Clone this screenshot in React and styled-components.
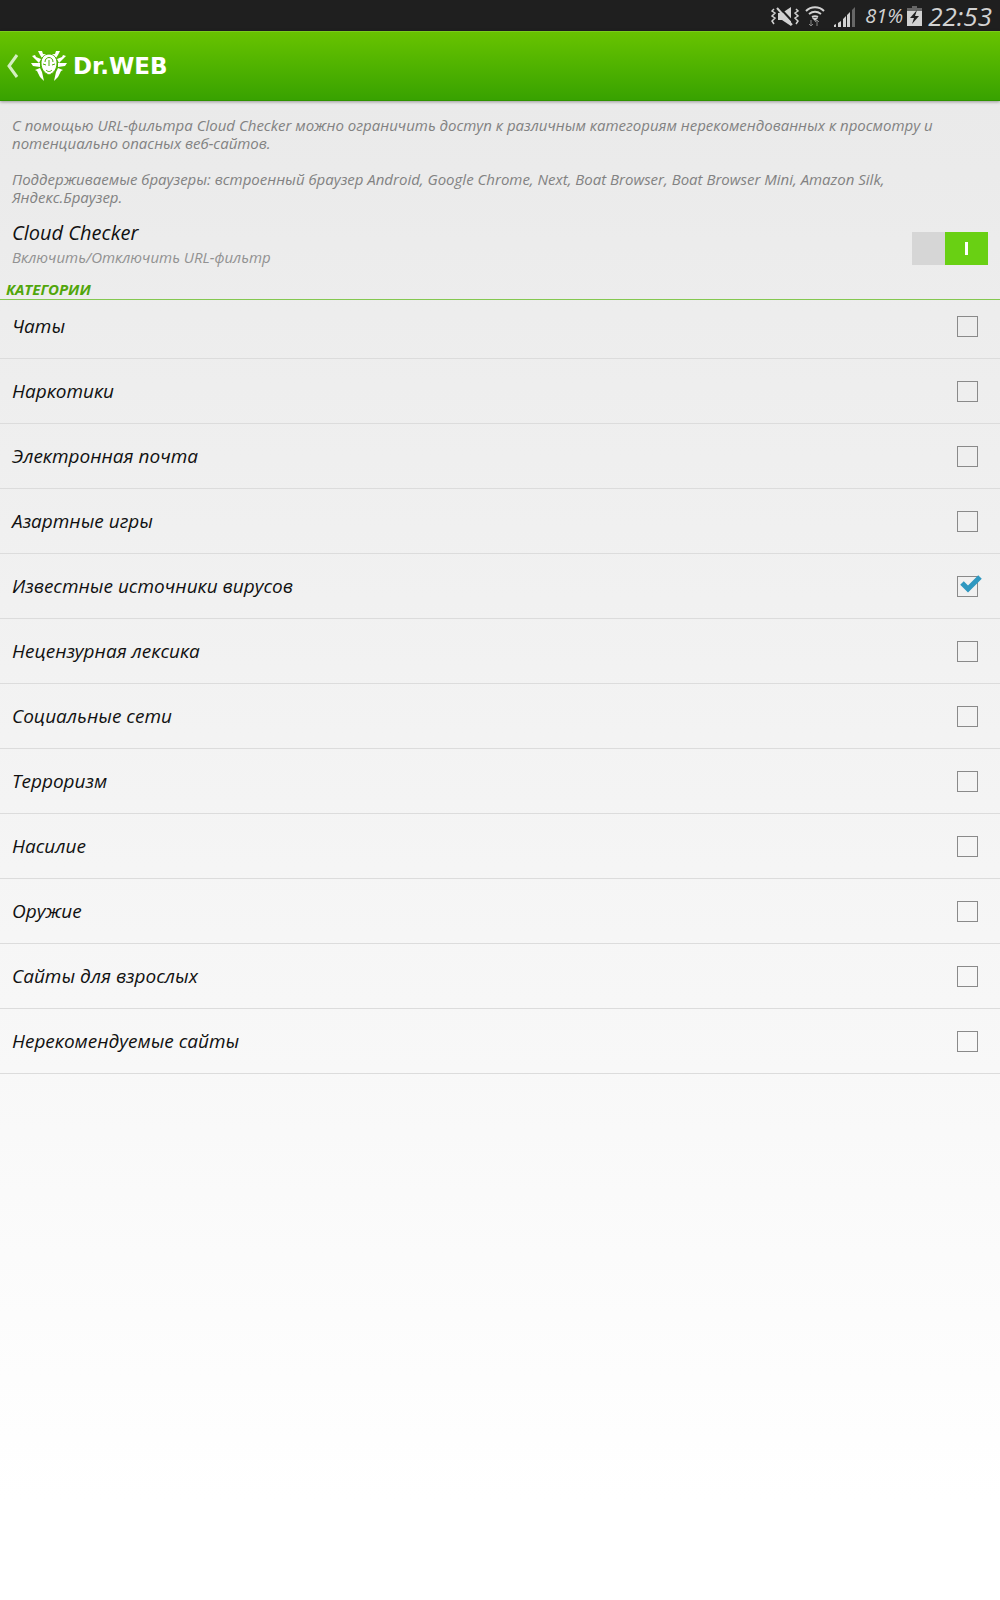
import React, { useState } from 'react'
import styled, { createGlobalStyle } from 'styled-components'

const GlobalStyle = createGlobalStyle`
* {
    box-sizing: border-box;
}
body {
    margin: 0;
    background-color: #fff;
    font-family: 'Open Sans', 'Noto Sans', sans-serif;
}
p, h1, h2 {
    margin: 0;
}
`

const Page = styled.div`
min-height: 100vh;
background: linear-gradient(#eaeaea 100px, #f1f1f1 600px, #f8f8f8 1070px, #fff 1500px);
`

const StatusBar = styled.div`
display: flex;
justify-content: flex-end;
align-items: center;
height: 31px;
padding-right: 8px;
background-color: #1f1f1f;
color: #d2d2d2;
font-style: italic;
svg {
    display: block;
}
`

const Battery = styled.span`
margin: 0 4px 0 8px;
font-size: 20px;
line-height: 30px;
`

const Clock = styled.span`
margin-left: 6px;
font-size: 26px;
line-height: 30px;
`

const Header = styled.header`
display: flex;
align-items: center;
height: 70px;
padding-left: 6px;
border-top: 1px solid #7ccc1c;
border-bottom: 1px solid #2f9300;
background: linear-gradient(#68c300, #38a200);
box-shadow: 0 1px 3px rgba(0, 0, 0, 0.35);
`

const BackButton = styled.button`
display: flex;
padding: 0;
border: 0;
background: none;
cursor: pointer;
`

const Brand = styled.h1`
display: flex;
align-items: center;
gap: 6px;
margin-left: 12px;
color: #fff;
font-family: 'DejaVu Sans', sans-serif;
font-size: 23px;
font-weight: 700;
line-height: 28px;
`

const Intro = styled.div`
padding: 15px 60px 0 12px;
color: #828282;
font-size: 15px;
font-style: italic;
line-height: 18px;
p + p {
    margin-top: 18px;
}
`

const FilterRow = styled.div`
display: flex;
justify-content: space-between;
align-items: center;
height: 75px;
padding: 9px 12px 0;
`

const FilterLabel = styled.label`
display: flex;
flex-direction: column;
padding-bottom: 6px;
font-style: italic;
line-height: 24px;
`

const FilterTitle = styled.span`
color: #111;
font-size: 20px;
`

const FilterHint = styled.span`
color: #929292;
font-size: 15px;
`

const Switch = styled.input`
appearance: none;
flex: none;
display: flex;
width: 76px;
height: 33px;
margin: 0;
background-color: #d6d6d6;
cursor: pointer;
&::before {
    content: '';
    width: 43px;
    height: 33px;
    background: linear-gradient(#fff, #fff) center / 3px 13px no-repeat #aaa;
}
&:checked {
    justify-content: flex-end;
}
&:checked::before {
    background-color: #69d013;
}
`

const SectionTitle = styled.h2`
height: 19px;
padding-left: 6px;
border-bottom: 1px solid #84c850;
color: #51a60b;
font-size: 15px;
font-style: italic;
font-weight: 700;
line-height: 16px;
`

// the list starts slightly scrolled under the section title
const CategoryList = styled.ul`
margin: -6px 0 0;
padding: 0;
list-style: none;
`

const CategoryRow = styled.label`
display: flex;
justify-content: space-between;
align-items: center;
height: 65px;
padding: 0 22px 0 12px;
border-bottom: 1px solid #dcdcdc;
color: #111;
font-size: 19px;
font-style: italic;
`

const Tick = styled.span`
position: relative;
display: flex;
svg {
    position: absolute;
    left: 3px;
    top: -2px;
    display: none;
    pointer-events: none;
}
input:checked + svg {
    display: block;
}
`

const Checkbox = styled.input`
appearance: none;
width: 21px;
height: 21px;
margin: 0;
border: 1px solid #8a8a8a;
cursor: pointer;
`

const categories = [
    'Чаты',
    'Наркотики',
    'Электронная почта',
    'Азартные игры',
    'Известные источники вирусов',
    'Нецензурная лексика',
    'Социальные сети',
    'Терроризм',
    'Насилие',
    'Оружие',
    'Сайты для взрослых',
    'Нерекомендуемые сайты'
]

const StatusIcons = () => (
    <svg width="86" height="30" viewBox="770 0 86 30" fill="none" stroke="#d2d2d2">
        <path d="M773 8l-2 2 3 2-3 3 3 2-3 3 2 3M795 8l2 2-3 2 3 3-3 2 3 3-2 3" strokeWidth="1.5" />
        <path d="M777 12h4l9-6v19l-9-6h-4z" fill="#d2d2d2" stroke="none" />
        <path d="M777 5l15 16" stroke="#1f1f1f" strokeWidth="2" />
        <path d="M776 7l15 17" strokeWidth="2" />
        <path d="M805 10c5-5 13-5 18 0M808 13c4-3 8-3 12 0M811 16c2-1 4-1 6 0" strokeWidth="2" />
        <path d="M811 17h6l-3 3z" fill="#d2d2d2" stroke="none" />
        <path d="M810 19v6M808 23l2 2 2-2M816 25v-6M814 21l2-2 2 2" stroke="#888" />
        <path d="M833 26v-2l2-1v3zM837 26v-4l3-2v6zM842 26v-8l3-3v11zM846 26v-12l3-3v15z" fill="#d2d2d2" stroke="none" />
        <path d="M851 26V9l3-3v20z" fill="#666" stroke="none" />
    </svg>
)

const BatteryIcon = () => (
    <svg width="15" height="30" viewBox="0 0 15 30">
        <path d="M5 5h5v2h5v4H0V7h5z" fill="#666" />
        <path d="M0 10h15v15H0z" fill="#d2d2d2" />
        <path d="M10 9l-7 8h4l-2 6 7-8H8z" fill="#1f1f1f" />
    </svg>
)

const Spider = () => (
    <svg width="36" height="32" viewBox="0 0 36 32" fill="#fff">
        <path d="M7 1l4 0 1 3 4 0-1 2-4 2-2-3zM29 1l-4 0-1 3-4 0 1 2 4 2 2-3z" />
        <path d="M1 6l3-1 1 2 5 2-2 4-4-4zM35 6l-3-1-1 2-5 2 2 4 4-4z" />
        <path d="M0 13l9 0 0 4-7-1zM36 13l-9 0 0 4 7-1z" />
        <path d="M4 20l5-2 2 4 2 9-4-4-3-6zM32 20l-5-2-2 4-2 9 4-4 3-6z" />
        <path d="M18 4c5 0 8 4 8 9 0 6-3 10-8 12-5-2-8-6-8-12 0-5 3-9 8-9z" stroke="#4cad00" />
        <path d="M12 14l3 1M21 15l3-1M14 12c0-6 8-6 8 0M15 20c2 2 4 2 6 0M18 10v6" fill="none" stroke="#4cad00" />
    </svg>
)

const App = () => {
    const [enabled, setEnabled] = useState(true)
    const [checked, setChecked] = useState(['Известные источники вирусов'])

    const toggle = (name) => {
        setChecked(checked.includes(name) ? checked.filter(item => item !== name) : [...checked, name])
    }

    return (
        <Page>
            <GlobalStyle />
            <StatusBar>
                <StatusIcons />
                <Battery>81%</Battery>
                <BatteryIcon />
                <Clock>22:53</Clock>
            </StatusBar>
            <Header>
                <BackButton aria-label="Назад">
                    <svg width="13" height="26" viewBox="0 0 13 26" fill="none" stroke="#d4efc0" strokeWidth="3">
                        <path d="M11 2L3 13l8 11" />
                    </svg>
                </BackButton>
                <Brand><Spider />Dr.WEB</Brand>
            </Header>
            <main>
                <Intro>
                    <p>С помощью URL-фильтра Cloud Checker можно ограничить доступ к различным категориям нерекомендованных к просмотру и потенциально опасных веб-сайтов.</p>
                    <p>Поддерживаемые браузеры: встроенный браузер Android, Google Chrome, Next, Boat Browser, Boat Browser Mini, Amazon Silk, Яндекс.Браузер.</p>
                </Intro>
                <FilterRow>
                    <FilterLabel htmlFor="urlFilter">
                        <FilterTitle>Cloud Checker</FilterTitle>
                        <FilterHint>Включить/Отключить URL-фильтр</FilterHint>
                    </FilterLabel>
                    <Switch id="urlFilter" type="checkbox" role="switch" checked={enabled} onChange={() => setEnabled(!enabled)} />
                </FilterRow>
                <SectionTitle>КАТЕГОРИИ</SectionTitle>
                <CategoryList>
                    {categories.map(name => (
                        <li key={name}>
                            <CategoryRow>
                                {name}
                                <Tick>
                                    <Checkbox type="checkbox" checked={checked.includes(name)} onChange={() => toggle(name)} />
                                    <svg width="22" height="20" viewBox="0 0 22 20" fill="none" stroke="#2f98c0" strokeWidth="5">
                                        <path d="M2 9l6 6L20 3" />
                                    </svg>
                                </Tick>
                            </CategoryRow>
                        </li>
                    ))}
                </CategoryList>
            </main>
        </Page>
    )
}

export default App
